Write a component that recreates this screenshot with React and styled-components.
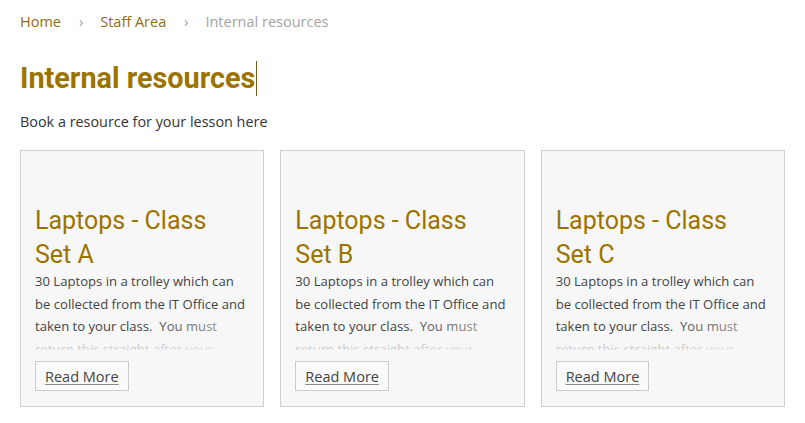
import React from "react";
import styled, { createGlobalStyle } from "styled-components";

const Global = createGlobalStyle`
  html, body { margin: 0; padding: 0; background: #ffffff; }
  body { font-family: "Open Sans", "Liberation Sans", sans-serif; color: #333; }
`;

const Page = styled.div`
  padding: 12px 20px 0 20px;
`;

const Crumbs = styled.nav`
  display: flex;
  align-items: center;
  font-size: 14.5px;
  line-height: 20px;
`;

const CrumbLink = styled.a`
  color: ${(p) => (p.$current ? "#a3a3a3" : "#8e6c12")};
  text-decoration: none;
`;

const Sep = styled.span`
  color: #999;
  margin: 0 17px 0 18px;
  font-size: 14px;
`;

const Title = styled.h1`
  margin: 28px 0 0 0;
  font-family: Roboto, "Liberation Sans", sans-serif;
  font-weight: 700;
  font-size: 28.8px;
  line-height: 36px;
  color: #9b7400;
  display: flex;
  align-items: center;
`;

const Caret = styled.span`
  display: inline-block;
  width: 1px;
  height: 35px;
  margin-left: 1px;
  background: #6b5a2a;
`;

const Intro = styled.p`
  margin: 15px 0 0 0;
  font-size: 14.4px;
  line-height: 22px;
  color: #333;
`;

const Grid = styled.div`
  display: grid;
  grid-template-columns: repeat(3, 1fr);
  gap: 16px;
  margin-top: 17px;
`;

const Card = styled.div`
  background: #f7f7f7;
  border: 1px solid #cfcfcf;
  padding: 53px 14px 15px 14px;
  display: flex;
  flex-direction: column;
`;

const CardTitle = styled.h2`
  margin: 0;
  padding-right: 14px;
  font-family: Roboto, "Liberation Sans", sans-serif;
  font-weight: 400;
  font-size: 25px;
  line-height: 33.5px;
  color: #9b7400;
`;

const Desc = styled.div`
  position: relative;
  height: 80px;
  overflow: hidden;
  font-size: 13.1px;
  line-height: 22.5px;
  color: #444;
  margin-top: -1px;
`;

const Fade = styled.div`
  position: absolute;
  left: 0;
  right: 0;
  bottom: 0;
  height: 36px;
  background: linear-gradient(to right, rgba(247, 247, 247, 0) 50%, rgba(247, 247, 247, 0.6) 100%);
`;

const FadeBottom = styled.div`
  position: absolute;
  left: 0;
  right: 0;
  bottom: 0;
  height: 14px;
  background: linear-gradient(to bottom, rgba(247, 247, 247, 0.55), rgba(247, 247, 247, 0.8));
`;

const ReadMore = styled.a`
  align-self: flex-start;
  margin-top: 11px;
  height: 30px;
  box-sizing: border-box;
  display: inline-flex;
  align-items: center;
  padding: 0 9px;
  border: 1px solid #cccccc;
  background: #fafafa;
  font-size: 14.5px;
  color: #444;
  text-decoration: underline;
  text-decoration-color: #888;
  text-underline-offset: 2px;
`;

const items = ["A", "B", "C"];

export default function App() {
  return (
    <>
      <Global />
      <Page>
        <Crumbs>
          <CrumbLink href="#">Home</CrumbLink>
          <Sep>›</Sep>
          <CrumbLink href="#">Staff Area</CrumbLink>
          <Sep>›</Sep>
          <CrumbLink $current>Internal resources</CrumbLink>
        </Crumbs>
        <Title>
          Internal resources
          <Caret />
        </Title>
        <Intro>Book a resource for your lesson here</Intro>
        <Grid>
          {items.map((l) => (
            <Card key={l}>
              <CardTitle>Laptops - Class Set {l}</CardTitle>
              <Desc>
                30 Laptops in a trolley which can be collected from the IT Office and taken to your class.&nbsp; You must return this straight after your lesson.
                <Fade />
                <FadeBottom />
              </Desc>
              <ReadMore href="#">Read More</ReadMore>
            </Card>
          ))}
        </Grid>
      </Page>
    </>
  );
}
